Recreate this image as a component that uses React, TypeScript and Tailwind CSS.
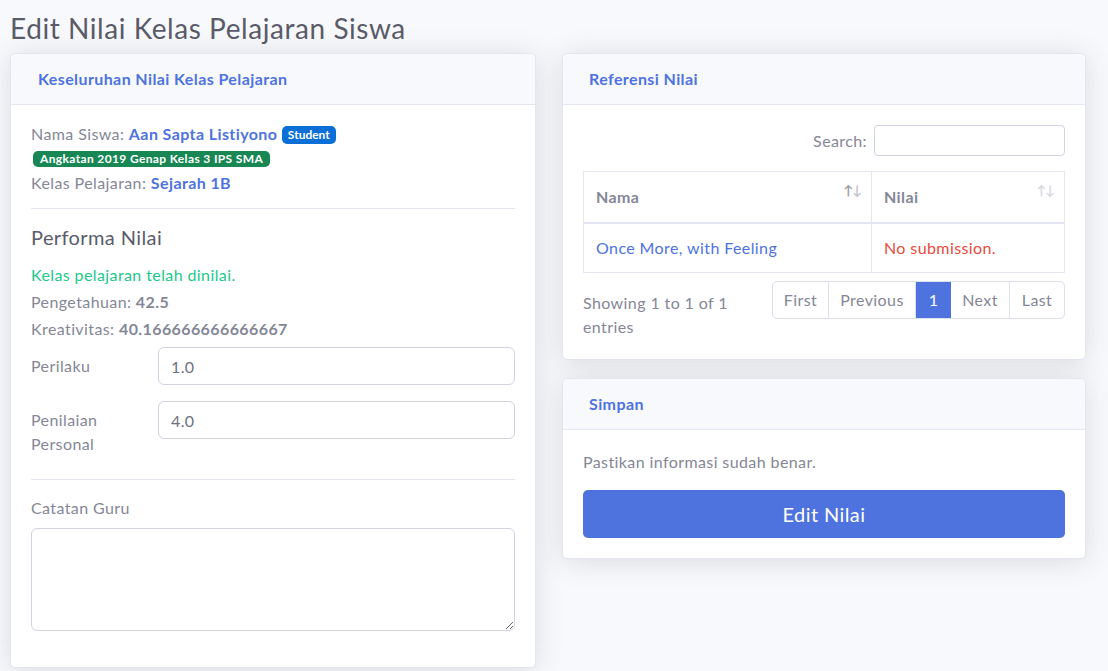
import React from "react";

const card =
  "bg-white border border-[#e3e6f0] rounded-[5px] shadow-[0_0.15rem_1.75rem_0_rgba(58,59,69,0.15)]";
const header =
  "h-[51px] bg-[#f8f9fc] border-b border-[#e3e6f0] rounded-t-[5px] flex items-center text-[16px] font-bold text-[#4e73df]";

function SortIcon({ dim }: { dim?: boolean }) {
  return (
    <span className="absolute right-[10px] top-[12px] text-[13px] leading-none tracking-[-1px]">
      <span className={dim ? "text-[#d8d9df]" : "text-[#9fa1ac]"}>↑</span>
      <span className={dim ? "text-[#d8d9df]" : "text-[#c4c5cc]"}>↓</span>
    </span>
  );
}

export default function App() {
  return (
    <div className="min-h-[671px] bg-[#f8f9fc] font-['Lato',sans-serif] tracking-[0.025em] text-[16px] text-[#858796]">
      <div className="pl-[10px] pt-[11px]">
        <h1 className="text-[28px] leading-[34px] text-[#5a5c69] mb-[8px] tracking-[0.02em]">
          Edit Nilai Kelas Pelajaran Siswa
        </h1>
        <div className="flex items-start gap-[26px]">
          {/* Left card */}
          <div className={card + " w-[526px]"}>
            <div className={header + " pl-[27px]"}>Keseluruhan Nilai Kelas Pelajaran</div>
            <div className="px-5 pt-[17px] pb-[36px]">
              <div className="leading-6">
                Nama Siswa:{" "}
                <span className="font-bold text-[#4e73df]">Aan Sapta Listiyono</span>{" "}
                <span className="inline-block align-[1px] text-[12px] font-bold leading-none tracking-normal text-white bg-[#0b6fd6] px-[6px] py-[3px] rounded-[5px]">
                  Student
                </span>{" "}
                <span className="inline-block ml-[2px] align-[1px] text-[12px] font-bold leading-none tracking-[0.03em] text-white bg-[#198754] px-[7px] py-[2px] rounded-[5px]">
                  Angkatan 2019 Genap Kelas 3 IPS SMA
                </span>
              </div>
              <div className="leading-6 mt-[1px]">
                Kelas Pelajaran: <span className="font-bold text-[#4e73df]">Sejarah 1B</span>
              </div>
              <div className="mt-[13px] border-t border-[#e3e6f0]" />
              <h5 className="mt-[16px] text-[20px] leading-6 text-[#5a5c69]">Performa Nilai</h5>
              <div className="mt-[12px] leading-[27px]">
                <div className="text-[#1cc88a]">Kelas pelajaran telah dinilai.</div>
                <div>
                  Pengetahuan: <span className="font-bold">42.5</span>
                </div>
                <div>
                  Kreativitas: <span className="font-bold">40.166666666666667</span>
                </div>
              </div>
              <div className="mt-[5px] flex">
                <div className="w-[127px] pt-[7px] leading-6">Perilaku</div>
                <input
                  defaultValue="1.0"
                  className="flex-1 h-[38px] border border-[#d1d3e2] rounded-[6px] px-3 text-[#6e707e] outline-none"
                />
              </div>
              <div className="mt-[16px] flex">
                <div className="w-[127px] pt-[7px] leading-6">
                  Penilaian
                  <br />
                  Personal
                </div>
                <input
                  defaultValue="4.0"
                  className="flex-1 h-[38px] border border-[#d1d3e2] rounded-[6px] px-3 text-[#6e707e] outline-none self-start"
                />
              </div>
              <div className="mt-[23px] border-t border-[#e3e6f0]" />
              <div className="mt-[16px] leading-6">Catatan Guru</div>
              <textarea className="mt-[8px] block w-full h-[103px] border border-[#d1d3e2] rounded-[6px] px-3 py-2 text-[#6e707e] outline-none resize-y" />
            </div>
          </div>

          {/* Right column */}
          <div className="w-[524px] flex flex-col gap-[18px]">
            <div className={card}>
              <div className={header + " pl-[26px]"}>Referensi Nilai</div>
              <div className="px-5 pt-[20px] pb-[20px]">
                <div className="flex justify-end items-center gap-[7px]">
                  <span className="leading-6">Search:</span>
                  <input className="w-[191px] h-[31px] border border-[#d1d3e2] rounded-[4px] px-2 outline-none" />
                </div>
                <table className="mt-[15px] w-full border-collapse">
                  <thead>
                    <tr>
                      <th className="relative w-[288px] text-left font-bold border border-[#e3e6f0] border-b-2 h-[51px] px-3 leading-6">
                        Nama
                        <SortIcon />
                      </th>
                      <th className="relative text-left font-bold border border-[#e3e6f0] border-b-2 h-[51px] px-3 leading-6">
                        Nilai
                        <SortIcon dim />
                      </th>
                    </tr>
                  </thead>
                  <tbody>
                    <tr>
                      <td className="border border-[#e3e6f0] h-[50px] px-3 text-[#4e73df]">
                        Once More, with Feeling
                      </td>
                      <td className="border border-[#e3e6f0] h-[50px] px-3 text-[#e74a3b]">
                        No submission.
                      </td>
                    </tr>
                  </tbody>
                </table>
                <div className="flex justify-between items-start">
                  <div className="pt-[18px] w-[170px] leading-6">Showing 1 to 1 of 1 entries</div>
                  <div className="mt-[8px] flex border border-[#dddfeb] rounded-[5px] h-[38px] leading-[36px] text-center">
                    <span className="w-[56px] border-r border-[#dddfeb]">First</span>
                    <span className="w-[87px] border-r border-[#dddfeb]">Previous</span>
                    <span className="w-[35px] bg-[#4e73df] text-white">1</span>
                    <span className="w-[59px] border-r border-[#dddfeb]">Next</span>
                    <span className="w-[54px]">Last</span>
                  </div>
                </div>
              </div>
            </div>

            <div className={card}>
              <div className={header + " pl-[26px]"}>Simpan</div>
              <div className="px-5 pt-[20px] pb-[20px]">
                <div className="leading-6">Pastikan informasi sudah benar.</div>
                <button className="mt-[16px] w-full h-[48px] rounded-[5px] bg-[#4e73df] text-white text-[20px]">
                  Edit Nilai
                </button>
              </div>
            </div>
          </div>
        </div>
      </div>
    </div>
  );
}
